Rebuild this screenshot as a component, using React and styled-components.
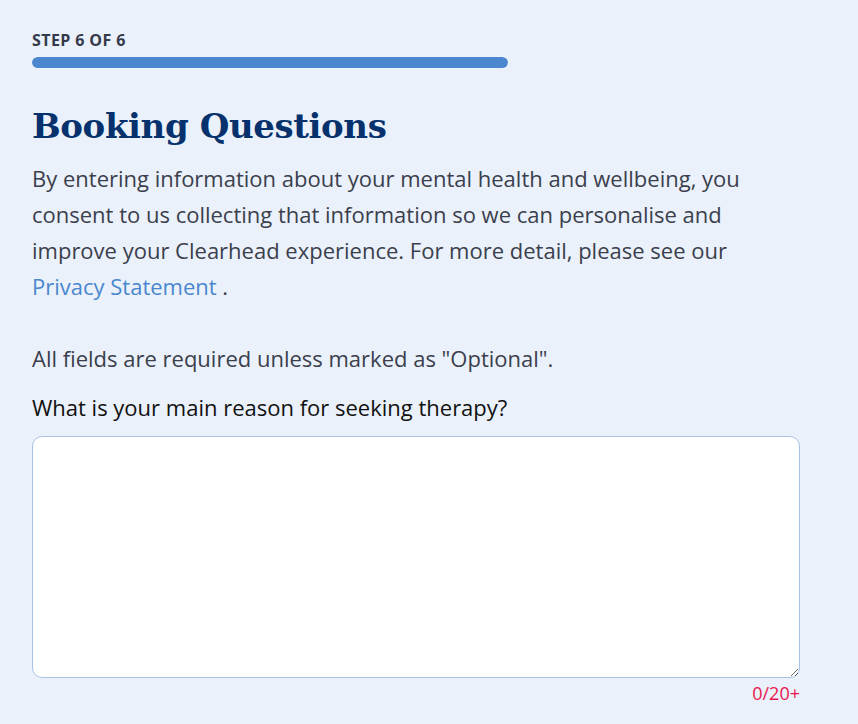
import styled, { createGlobalStyle } from 'styled-components'

const GlobalStyle = createGlobalStyle`
    html, body {
        margin: 0;
        padding: 0;
        background: #eaf1fa;
    }
    body {
        font-family: 'Open Sans', 'Noto Sans', sans-serif;
    }
`

const Page = styled.div`
    min-height: 724px;
    padding: 30px 58px 0 32px;
    box-sizing: border-box;
    background: #eaf1fa;
`

const StepLabel = styled.div`
    font-size: 16px;
    font-weight: 700;
    letter-spacing: 0.4px;
    color: #343a4a;
    line-height: 20px;
`

const ProgressTrack = styled.div`
    width: 476px;
    height: 11px;
    margin-top: 7px;
    border-radius: 6px;
    background: #d6e2f2;
    overflow: hidden;
`

const ProgressFill = styled.div`
    height: 100%;
    border-radius: 6px;
    background: #4a87cf;
`

const Heading = styled.h1`
    font-family: 'DejaVu Serif', 'Liberation Serif', serif;
    font-size: 34px;
    font-weight: 700;
    letter-spacing: -0.4px;
    color: #06316d;
    margin: 34px 0 0;
    line-height: 48px;
`

const Paragraph = styled.p`
    font-size: 22px;
    line-height: 36px;
    color: #3b3f4d;
    margin: ${(p) => (p.$gap ? '36px 0 0' : '10px 0 0')};
`

const Link = styled.a`
    color: #4a87cf;
    text-decoration: none;
`

const Label = styled.label`
    display: block;
    font-size: 22px;
    line-height: 30px;
    color: #111;
    margin-top: 16px;
`

const TextArea = styled.textarea`
    display: block;
    width: 100%;
    height: 242px;
    margin-top: 14px;
    box-sizing: border-box;
    border: 1px solid #a8c3e8;
    border-radius: 10px;
    background: #ffffff;
    padding: 12px 14px;
    font-family: inherit;
    font-size: 20px;
    outline: none;
`

const Counter = styled.div`
    text-align: right;
    font-size: 18px;
    line-height: 30px;
    color: #e8174f;
`

export default function App() {
    const step = 6
    const total = 6
    return (
        <>
            <GlobalStyle />
            <Page>
                <StepLabel>STEP {step} OF {total}</StepLabel>
                <ProgressTrack>
                    <ProgressFill style={{ width: `${(step / total) * 100}%` }} />
                </ProgressTrack>
                <Heading>Booking Questions</Heading>
                <Paragraph>
                    By entering information about your mental health and wellbeing, you consent to us
                    collecting that information so we can personalise and improve your Clearhead
                    experience. For more detail, please see our <Link href='#'>Privacy Statement</Link> .
                </Paragraph>
                <Paragraph $gap>All fields are required unless marked as "Optional".</Paragraph>
                <Label htmlFor='reason'>What is your main reason for seeking therapy?</Label>
                <TextArea id='reason' />
                <Counter>0/20+</Counter>
            </Page>
        </>
    )
}
